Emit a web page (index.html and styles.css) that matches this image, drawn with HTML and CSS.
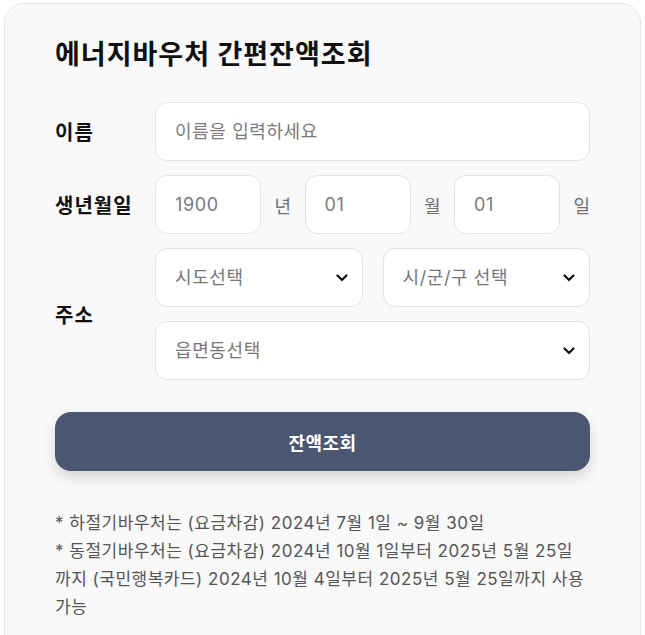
FILE: index.html
```html
<!DOCTYPE html>
<html lang="ko">
<head>
    <meta charset="UTF-8">
    <meta name="viewport" content="width=device-width, initial-scale=1.0">
    <title>에너지바우처 간편잔액조회</title>
    <link rel="stylesheet" href="styles.css">
</head>
<body>

    <div class="card">
        <h1>에너지바우처 간편잔액조회</h1>

        <div class="form-row">
            <label class="form-label" for="userName">이름</label>
            <div class="form-field">
                <input type="text" id="userName" class="text-input" placeholder="이름을 입력하세요">
            </div>
        </div>

        <div class="form-row">
            <label class="form-label" for="birthYear">생년월일</label>
            <div class="form-field birth">
                <input type="text" id="birthYear" class="text-input short" placeholder="1900">
                <span class="unit">년</span>
                <input type="text" id="birthMonth" class="text-input short" placeholder="01">
                <span class="unit">월</span>
                <input type="text" id="birthDay" class="text-input short" placeholder="01">
                <span class="unit last">일</span>
            </div>
        </div>

        <div class="form-row">
            <label class="form-label">주소</label>
            <div class="form-field address">
                <div class="select-wrap">
                    <select class="select-input">
                        <option>시도선택</option>
                    </select>
                    <svg class="chevron" viewBox="0 0 12 8"><path d="M1.5 1.5 6 6l4.5-4.5"/></svg>
                </div>
                <div class="select-wrap">
                    <select class="select-input">
                        <option>시/군/구 선택</option>
                    </select>
                    <svg class="chevron" viewBox="0 0 12 8"><path d="M1.5 1.5 6 6l4.5-4.5"/></svg>
                </div>
                <div class="select-wrap wide">
                    <select class="select-input">
                        <option>읍면동선택</option>
                    </select>
                    <svg class="chevron" viewBox="0 0 12 8"><path d="M1.5 1.5 6 6l4.5-4.5"/></svg>
                </div>
            </div>
        </div>

        <button class="search-button">잔액조회</button>

        <div class="notes">
            <p>* 하절기바우처는 (요금차감) 2024년 7월 1일 ~ 9월 30일</p>
            <p>* 동절기바우처는 (요금차감) 2024년 10월 1일부터 2025년 5월 25일<br>까지 (국민행복카드) 2024년 10월 4일부터 2025년 5월 25일까지 사용<br>가능</p>
        </div>
    </div>

</body>
</html>
```

FILE: styles.css
```css
body {
    margin: 0;
    background-color: #ffffff;
    font-family: 'Inter', 'Noto Sans CJK KR', sans-serif;
    color: #111;
}
.card {
    margin: 3px 4px 0 4px;
    padding: 32px 50px 40px 50px;
    background-color: #f9f9fa;
    border: 1px solid #e6e6e8;
    border-radius: 20px;
}
.card h1 {
    margin: 0 0 28px 0;
    font-size: 27px;
    line-height: 38px;
    font-weight: 700;
    color: #111;
    letter-spacing: 1px;
}
.form-row {
    display: flex;
    align-items: center;
    margin-bottom: 14px;
}
.form-label {
    width: 100px;
    flex-shrink: 0;
    font-size: 20px;
    font-weight: 700;
    color: #111;
    letter-spacing: 1px;
}
.form-field {
    flex: 1;
    display: flex;
    align-items: center;
}
.text-input,
.select-input {
    box-sizing: border-box;
    width: 100%;
    height: 59px;
    padding: 0 19px;
    border: 1px solid #e3e3e6;
    border-radius: 12px;
    background-color: #fff;
    font-family: 'Inter', 'Noto Sans CJK KR', sans-serif;
    font-size: 18px;
    letter-spacing: 0.6px;
    color: #777;
    outline: none;
}
.text-input::placeholder {
    color: #7a7a7a;
}
.text-input.short {
    width: 106px;
    flex-shrink: 0;
}
.unit {
    width: 43.5px;
    flex-shrink: 0;
    text-align: center;
    font-size: 18px;
    color: #6f6f6f;
}
.unit.last {
    width: auto;
    flex: 1;
    text-align: right;
}
.address {
    display: grid;
    grid-template-columns: 1fr 1fr;
    column-gap: 20px;
    row-gap: 14px;
}
.select-wrap {
    position: relative;
}
.select-wrap.wide {
    grid-column: 1 / 3;
}
.select-input {
    appearance: none;
    -webkit-appearance: none;
    padding-right: 40px;
}
.chevron {
    position: absolute;
    right: 15px;
    top: 26px;
    width: 12px;
    height: 8px;
    fill: none;
    stroke: #111;
    stroke-width: 2.2;
    stroke-linecap: round;
    stroke-linejoin: round;
    pointer-events: none;
}
.search-button {
    display: block;
    width: 100%;
    height: 59px;
    margin-top: 32px;
    border: none;
    border-radius: 16px;
    background-color: #4b5670;
    color: #fff;
    font-family: 'Inter', 'Noto Sans CJK KR', sans-serif;
    font-size: 18px;
    font-weight: 700;
    letter-spacing: 0.5px;
    box-shadow: 0 6px 14px rgba(0, 0, 0, 0.15);
    cursor: pointer;
}
.notes {
    margin-top: 38px;
}
.notes p {
    margin: 0;
    font-size: 17px;
    line-height: 28px;
    letter-spacing: 0.5px;
    color: #555;
}
```
